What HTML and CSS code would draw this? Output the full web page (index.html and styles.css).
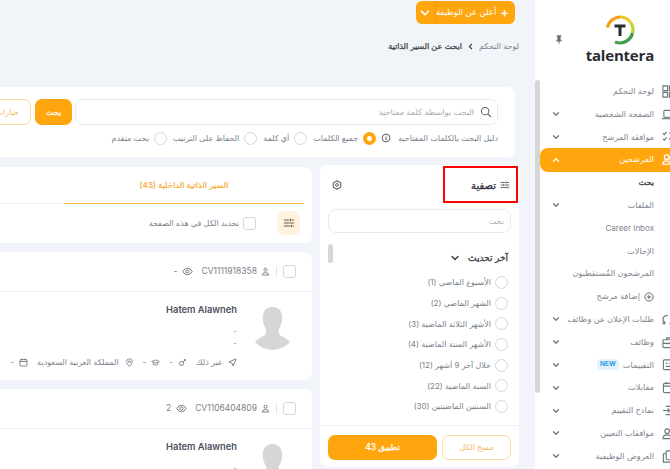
FILE: index.html
```html
<!DOCTYPE html>
<html lang="ar" dir="rtl">
<head>
  <meta charset="UTF-8">
  <title>talentera</title>
  <link rel="stylesheet" href="styles.css">
</head>
<body>
  <svg class="sprite" aria-hidden="true">
    <symbol id="i-chev" viewBox="0 0 12 12"><path d="M3 4.500 6 7.500 9 4.500" fill="none" stroke="currentColor" stroke-width="1.500" stroke-linecap="round" stroke-linejoin="round"/></symbol>
    <symbol id="i-sliders" viewBox="0 0 14 14"><path d="M1 3.500h6.500M10 3.500h3M1 7h2.500M6 7h7M1 10.500h7.500M11 10.500h2M8.750 2v3M4.750 5.500v3M9.750 9v3" fill="none" stroke="currentColor" stroke-width="1.200"/></symbol>
    <symbol id="i-user" viewBox="0 0 14 14"><circle cx="7" cy="4.200" r="2.400" fill="none" stroke="currentColor" stroke-width="1.200"/><path d="M2 12.500c0-2.500 2-3.700 5-3.700s5 1.200 5 3.700z" fill="none" stroke="currentColor" stroke-width="1.200"/></symbol>
    <symbol id="i-eye" viewBox="0 0 14 14"><path d="M1 7c2-3 4-4 6-4s4 1 6 4c-2 3-4 4-6 4s-4-1-6-4z" fill="none" stroke="currentColor" stroke-width="1.100"/><circle cx="7" cy="7" r="2" fill="none" stroke="currentColor" stroke-width="1.100"/></symbol>
    <symbol id="i-send" viewBox="0 0 14 14"><path d="M12.500 1.500 1.500 6l4.500 1.800L8 12.500z" fill="none" stroke="currentColor" stroke-width="1.200" stroke-linejoin="round"/></symbol>
    <symbol id="i-gender" viewBox="0 0 14 14"><circle cx="5.500" cy="8.500" r="3.200" fill="none" stroke="currentColor" stroke-width="1.200"/><path d="M8 6l3-3M9 2.500h2.500V5" fill="none" stroke="currentColor" stroke-width="1.200"/></symbol>
    <symbol id="i-grad" viewBox="0 0 14 14"><path d="M1 5.500 7 3l6 2.500L7 8z" fill="none" stroke="currentColor" stroke-width="1.100" stroke-linejoin="round"/><path d="M3.500 7v3c1 1.300 6 1.300 7 0V7" fill="none" stroke="currentColor" stroke-width="1.100"/></symbol>
    <symbol id="i-pin" viewBox="0 0 14 14"><path d="M7 13C4 10 2.500 8 2.500 5.800a4.500 4.500 0 0 1 9 0C11.500 8 10 10 7 13z" fill="none" stroke="currentColor" stroke-width="1.100"/><circle cx="7" cy="5.800" r="1.500" fill="none" stroke="currentColor" stroke-width="1.100"/></symbol>
    <symbol id="i-cal" viewBox="0 0 14 14"><rect x="1.500" y="2.500" width="11" height="10" rx="1.500" fill="none" stroke="currentColor" stroke-width="1.200"/><path d="M1.500 5.500h11M4.500 1v2.500M9.500 1v2.500" fill="none" stroke="currentColor" stroke-width="1.200"/></symbol>
    <symbol id="i-gear" viewBox="0 0 14 14"><path d="M7 1l5.200 3v6L7 13l-5.200-3V4z" fill="none" stroke="currentColor" stroke-width="1.500" stroke-linejoin="round"/><circle cx="7" cy="7" r="2" fill="none" stroke="currentColor" stroke-width="1.300"/></symbol>
    <symbol id="i-search" viewBox="0 0 14 14"><circle cx="6" cy="6" r="4.300" fill="none" stroke="currentColor" stroke-width="1.200"/><path d="M9.200 9.200 12.500 12.500" fill="none" stroke="currentColor" stroke-width="1.200" stroke-linecap="round"/></symbol>
    <symbol id="i-info" viewBox="0 0 14 14"><circle cx="7" cy="7" r="5.500" fill="none" stroke="currentColor" stroke-width="1.200"/><path d="M7 6.200v4M7 3.800v1.200" fill="none" stroke="currentColor" stroke-width="1.400"/></symbol>
    <symbol id="i-plus" viewBox="0 0 14 14"><circle cx="7" cy="7" r="5.800" fill="none" stroke="currentColor" stroke-width="1.200"/><path d="M7 4v6M4 7h6" fill="none" stroke="currentColor" stroke-width="1.200"/></symbol>
    <symbol id="i-grid" viewBox="0 0 14 14"><path d="M1 1h5v5H1zM8 1h5v5H8zM1 8h5v5H1zM8 8h5v5H8z" fill="none" stroke="currentColor" stroke-width="1.200"/></symbol>
    <symbol id="i-laptop" viewBox="0 0 14 14"><rect x="2" y="2.500" width="10" height="7.500" rx="1" fill="none" stroke="currentColor" stroke-width="1.200"/><path d="M0 11.500h14" stroke="currentColor" stroke-width="1.200"/></symbol>
    <symbol id="i-check" viewBox="0 0 14 14"><path d="M1 3.500 2.500 5 5 2M1 9.500 2.500 11 5 8M7.500 3.500H14M7.500 9.500H14" fill="none" stroke="currentColor" stroke-width="1.200"/></symbol>
    <symbol id="i-users" viewBox="0 0 14 14"><circle cx="5" cy="4.500" r="2.500" fill="none" stroke="currentColor" stroke-width="1.500"/><circle cx="10.500" cy="5.500" r="2" fill="none" stroke="currentColor" stroke-width="1.500"/><path d="M1 12c0-2.500 2-3.500 4-3.500s4 1 4 3.500zM9 8.500c2.500-.5 4.500.8 4.500 3.500H10" fill="none" stroke="currentColor" stroke-width="1.500"/></symbol>
    <symbol id="i-swap" viewBox="0 0 14 14"><path d="M6 2.500C3 2.500 1 4.500 1 7s1 3.500 2 4M8 11.500c3 0 5-2 5-4.500s-1-3.500-2-4M3 9v2.500H.5M11 5V2.500h2.500" fill="none" stroke="currentColor" stroke-width="1.300"/></symbol>
    <symbol id="i-case" viewBox="0 0 14 14"><rect x="1" y="4" width="12" height="8.500" rx="1" fill="none" stroke="currentColor" stroke-width="1.200"/><path d="M5 4V2h4v2M1 8h12M7 7v2" fill="none" stroke="currentColor" stroke-width="1.200"/></symbol>
    <symbol id="i-task" viewBox="0 0 14 14"><rect x="1.500" y="2" width="11" height="10.500" rx="1" fill="none" stroke="currentColor" stroke-width="1.200"/><path d="M4 5.500h2M8 5.500h2.500M4 9h6.500" fill="none" stroke="currentColor" stroke-width="1.200"/></symbol>
    <symbol id="i-login" viewBox="0 0 14 14"><path d="M4 2.500h8.500v9H4M1 7h7M6 4.800 8.200 7 6 9.200" fill="none" stroke="currentColor" stroke-width="1.200"/></symbol>
    <symbol id="i-person" viewBox="0 0 14 14"><circle cx="5.500" cy="4.500" r="2.500" fill="none" stroke="currentColor" stroke-width="1.200"/><path d="M1 12.500c0-3 2-4 4.500-4s4.500 1 4.500 4zM11 5l1.500 1.500L14 4" fill="none" stroke="currentColor" stroke-width="1.200"/></symbol>
    <symbol id="i-copy" viewBox="0 0 14 14"><rect x="4.500" y="1" width="8.500" height="9.500" rx="1" fill="none" stroke="currentColor" stroke-width="1.200"/><path d="M4.500 4H1.500v9h8v-2.500" fill="none" stroke="currentColor" stroke-width="1.200"/></symbol>
  </svg>

  <div class="app">
    <aside class="sidebar">
      <header class="brand">
        <div class="logo">
          <svg class="logo-mark" viewBox="0 0 32 32" width="32" height="32">
            <path d="M3.500 13.500A13 13 0 0 1 16 3" fill="none" stroke="#f6a01c" stroke-width="3.200"/>
            <path d="M16 3A13 13 0 0 1 27 9" fill="none" stroke="#ecc71f" stroke-width="3.200"/>
            <path d="M27 9A13 13 0 0 1 28.500 19" fill="none" stroke="#b9d433" stroke-width="3.200"/>
            <path d="M28.500 19A13 13 0 0 1 11 28" fill="none" stroke="#3f9f4a" stroke-width="3.200"/>
            <path d="M10.500 10.500h11v3h-4v8.500h-3v-8.500h-4z" fill="#2b2b30"/>
          </svg>
          <span class="logo-text">talentera</span>
        </div>
        <svg class="pin" viewBox="0 0 10 12" width="8" height="10"><path d="M2 0h6v1L7 2v3.500L9 7.500H6L5 12 4 7.500H1L3 5.500V2L2 1z" fill="#6a6f78"/></svg>
      </header>

      <nav class="menu">
        <a class="side-row"><svg class="side-icon"><use href="#i-grid"/></svg><span>لوحة التحكم</span></a>
        <a class="side-row"><svg class="side-icon"><use href="#i-laptop"/></svg><span>الصفحة الشخصية</span><svg class="side-chev"><use href="#i-chev"/></svg></a>
        <a class="side-row"><svg class="side-icon"><use href="#i-check"/></svg><span>موافقة المرشح</span><svg class="side-chev"><use href="#i-chev"/></svg></a>
        <a class="side-row is-active"><svg class="side-icon"><use href="#i-users"/></svg><span>المرشحين</span><svg class="side-chev is-open"><use href="#i-chev"/></svg></a>
        <a class="side-row is-sub is-current"><span>بحث</span></a>
        <a class="side-row is-sub"><span>الملفات</span><svg class="side-chev"><use href="#i-chev"/></svg></a>
        <a class="side-row is-sub is-latin"><span>Career Inbox</span></a>
        <a class="side-row is-sub"><span>الإحالات</span></a>
        <a class="side-row is-sub"><span>المرشحون المُستقطبون</span></a>
        <a class="side-row is-sub"><svg class="add-icon"><use href="#i-plus"/></svg><span>إضافة مرشح</span></a>
        <a class="side-row"><svg class="side-icon"><use href="#i-swap"/></svg><span>طلبات الإعلان عن وظائف</span><svg class="side-chev"><use href="#i-chev"/></svg></a>
        <a class="side-row"><svg class="side-icon"><use href="#i-case"/></svg><span>وظائف</span><svg class="side-chev"><use href="#i-chev"/></svg></a>
        <a class="side-row"><svg class="side-icon"><use href="#i-task"/></svg><span>التقييمات</span><b class="badge">NEW</b><svg class="side-chev"><use href="#i-chev"/></svg></a>
        <a class="side-row"><svg class="side-icon"><use href="#i-cal"/></svg><span>مقابلات</span><svg class="side-chev"><use href="#i-chev"/></svg></a>
        <a class="side-row"><svg class="side-icon"><use href="#i-login"/></svg><span>نماذج التقييم</span><svg class="side-chev"><use href="#i-chev"/></svg></a>
        <a class="side-row"><svg class="side-icon"><use href="#i-person"/></svg><span>موافقات التعيين</span><svg class="side-chev"><use href="#i-chev"/></svg></a>
        <a class="side-row"><svg class="side-icon"><use href="#i-copy"/></svg><span>العروض الوظيفية</span><svg class="side-chev"><use href="#i-chev"/></svg></a>
      </nav>
      <div class="side-thumb"></div>
    </aside>

    <main class="main">
      <div class="post-btn">
        <span class="post-label"><b>+</b> أعلن عن الوظيفة</span>
        <span class="post-drop"><svg><use href="#i-chev"/></svg></span>
      </div>

      <div class="crumbs">
        <span>لوحة التحكم</span>
        <svg><use href="#i-chev"/></svg>
        <strong>ابحث عن السير الذاتية</strong>
      </div>

      <section class="search-card">
        <div class="search-row">
          <div class="search-input">
            <svg><use href="#i-search"/></svg>
            <span>البحث بواسطة كلمة مفتاحية</span>
          </div>
          <div class="btn btn-main search-go">بحث</div>
          <div class="btn btn-ghost search-opts">خيارات</div>
        </div>
        <div class="search-modes">
          <span class="modes-label">دليل البحث بالكلمات المفتاحية</span>
          <svg class="modes-info"><use href="#i-info"/></svg>
          <label class="mode"><i class="radio is-on"></i>جميع الكلمات</label>
          <label class="mode"><i class="radio"></i>أي كلمة</label>
          <label class="mode"><i class="radio"></i>الحفاظ على الترتيب</label>
          <label class="mode"><i class="radio"></i>بحث متقدم</label>
        </div>
      </section>

      <div class="content">
        <aside class="filter">
          <header class="filter-head">
            <svg class="filter-icon"><use href="#i-sliders"/></svg>
            <h2>تصفية</h2>
            <svg class="filter-gear"><use href="#i-gear"/></svg>
          </header>
          <div class="filter-search">بحث</div>
          <div class="filter-body">
            <div class="filter-title">آخر تحديث <svg><use href="#i-chev"/></svg></div>
            <label class="filter-opt"><i class="radio"></i>الأسبوع الماضي (1)</label>
            <label class="filter-opt"><i class="radio"></i>الشهر الماضي (2)</label>
            <label class="filter-opt"><i class="radio"></i>الأشهر الثلاثة الماضية (3)</label>
            <label class="filter-opt"><i class="radio"></i>الأشهر الستة الماضية (4)</label>
            <label class="filter-opt"><i class="radio"></i>خلال آخر 9 أشهر (12)</label>
            <label class="filter-opt"><i class="radio"></i>السنة الماضية (22)</label>
            <label class="filter-opt"><i class="radio"></i>السنتين الماضيتين (30)</label>
            <div class="filter-thumb"></div>
          </div>
          <footer class="filter-foot">
            <div class="btn btn-ghost foot-clear">مسح الكل</div>
            <div class="btn btn-main foot-apply">تطبيق 43</div>
          </footer>
        </aside>

        <div class="results">
          <section class="tab-card">
            <div class="tabs"><div class="tab">السير الذاتية الداخلية (43)</div></div>
            <div class="tab-tools">
              <span class="tool-btn"><svg><use href="#i-sliders"/></svg></span>
              <i class="check"></i>
              <span class="tool-text">تحديد الكل في هذه الصفحة</span>
            </div>
          </section>

          <article class="cv-card">
            <header class="cv-head">
              <i class="check"></i>
              <span class="cv-sep"></span>
              <svg class="ico"><use href="#i-user"/></svg>
              <span class="cv-id">CV1111918358</span>
              <svg class="ico cv-eye"><use href="#i-eye"/></svg>
              <span>-</span>
            </header>
            <div class="cv-body">
              <svg class="avatar" viewBox="0 0 36 44"><path d="M18 0c6 0 10 4 10 11 0 4-1 8-3 11-1 2-1 5 1 7 3 2 8 4 10 7-4 5-11 8-18 8S4 41 0 36c2-3 7-5 10-7 2-2 2-5 1-7-2-3-3-7-3-11C8 4 12 0 18 0z" fill="#d6d6d6"/></svg>
              <div class="cv-info">
                <div class="cv-name">Hatem Alawneh</div>
                <div class="cv-dash">-</div>
                <div class="cv-dash">-</div>
                <div class="cv-meta">
                  <span class="meta-item is-wide"><svg class="ico"><use href="#i-send"/></svg><span>غير ذلك</span></span>
                  <span class="meta-item"><svg class="ico"><use href="#i-gender"/></svg><span>-</span></span>
                  <span class="meta-item"><svg class="ico"><use href="#i-grad"/></svg><span>-</span></span>
                  <span class="meta-item is-wide"><svg class="ico"><use href="#i-pin"/></svg><span>المملكة العربية السعودية</span></span>
                  <span class="meta-item"><svg class="ico"><use href="#i-cal"/></svg><span>-</span></span>
                </div>
              </div>
            </div>
          </article>

          <article class="cv-card">
            <header class="cv-head">
              <i class="check"></i>
              <span class="cv-sep"></span>
              <svg class="ico"><use href="#i-user"/></svg>
              <span class="cv-id">CV1106404809</span>
              <svg class="ico cv-eye"><use href="#i-eye"/></svg>
              <span>2</span>
            </header>
            <div class="cv-body">
              <svg class="avatar" viewBox="0 0 36 44"><path d="M18 0c6 0 10 4 10 11 0 4-1 8-3 11-1 2-1 5 1 7 3 2 8 4 10 7-4 5-11 8-18 8S4 41 0 36c2-3 7-5 10-7 2-2 2-5 1-7-2-3-3-7-3-11C8 4 12 0 18 0z" fill="#d6d6d6"/></svg>
              <div class="cv-info">
                <div class="cv-name">Hatem Alawneh</div>
                <div class="cv-dash">-</div>
              </div>
            </div>
          </article>
        </div>
      </div>

      <div class="marker"></div>
    </main>
  </div>
</body>
</html>
```

FILE: styles.css
```css
* {
  box-sizing: border-box;
}

html, body {
  height: 469px;
  margin: 0;
  overflow: hidden;
}

body {
  font: 8px/1.3 Inter, "DejaVu Sans", sans-serif;
  color: #7a7f8a;
  background: #f1f4f9;
}

.sprite {
  display: none;
}

.app {
  display: flex;
  height: 469px;
}

svg {
  display: block;
  flex: none;
}

/* sidebar */
.sidebar {
  position: relative;
  flex: none;
  width: 135px;
  height: 469px;
  padding-left: 5px;
  overflow: hidden;
  background: #fff;
}

.brand {
  display: flex;
  align-items: center;
  justify-content: space-between;
  height: 80px;
  padding: 0 16px 4px 15px;
}

.logo {
  display: flex;
  flex-direction: column;
  align-items: center;
  padding-top: 2px;
}

.logo-mark {
  width: 32px;
  height: 32px;
}

.logo-text {
  font: 700 15px/19px "Open Sans", sans-serif;
  letter-spacing: -0.2px;
  color: #2b2b30;
}

.pin {
  margin-bottom: -3px;
}

.menu {
  display: flex;
  flex-direction: column;
  margin-right: -5px;
}

.side-row {
  display: flex;
  flex: none;
  align-items: center;
  height: 22.800px;
  padding-left: 11px;
  font-size: 8.200px;
  white-space: nowrap;
  color: #80848d;
}

.side-row.is-sub {
  padding-right: 21px;
}

.side-row.is-latin {
  font-size: 8px;
}

.side-icon {
  width: 13px;
  height: 13px;
  margin-left: 8px;
  color: #6e737d;
}

.side-chev {
  width: 10px;
  height: 10px;
  margin-right: auto;
  color: #777;
}

.side-chev.is-open {
  transform: rotate(180deg);
}

.side-row.is-active {
  height: 24px;
  margin: -0.6px 0;
  border-top-left-radius: 8px;
  border-bottom-left-radius: 8px;
  color: #fff;
  background: #ffa50d;
}

.side-row.is-active .side-icon,
.side-row.is-active .side-chev {
  color: #fff;
}

.side-row.is-current {
  color: #33363d;
  -webkit-text-stroke: 0.25px #33363d;
}

.add-icon {
  width: 10px;
  height: 10px;
  margin-left: 4px;
  color: #555;
}

.badge {
  margin-right: 4px;
  padding: 1px 3px;
  border-radius: 4px;
  font-size: 6.500px;
  line-height: 9px;
  color: #2f9be8;
  background: #e3f3fd;
}

.side-thumb {
  position: absolute;
  top: 80px;
  left: 0;
  width: 5px;
  height: 313px;
  border-radius: 3px;
  background: #d6d6d6;
}

/* main column */
.main {
  position: relative;
  flex: 1;
  min-width: 0;
  height: 469px;
  padding: 1px 16px 0 0;
}

.post-btn {
  display: flex;
  width: 99px;
  height: 23px;
  margin-right: 4px;
  border-radius: 6px;
  color: #fff;
  background: #ffa50d;
}

.post-label {
  display: flex;
  flex: 1;
  align-items: center;
  gap: 4px;
  padding-right: 6px;
  font-size: 8.500px;
  white-space: nowrap;
}

.post-label b {
  font-size: 13px;
  font-weight: 600;
}

.post-drop {
  display: flex;
  align-items: center;
  justify-content: center;
  width: 23px;
  border-right: 1px solid #f59c05;
}

.post-drop svg {
  width: 14px;
  height: 14px;
}

.crumbs {
  display: flex;
  align-items: center;
  gap: 4px;
  height: 16px;
  margin-top: 14px;
  font-size: 8px;
}

.crumbs svg {
  width: 9px;
  height: 9px;
  color: #444;
  transform: rotate(90deg);
}

.crumbs strong {
  font-weight: 400;
  color: #3d4048;
  -webkit-text-stroke: 0.25px #3d4048;
}

.search-card {
  height: 70px;
  margin: 33px 4px 0 -50px;
  padding: 12px 17px 0;
  border-radius: 0 8px 8px 0;
  background: #fff;
}

.search-row {
  display: flex;
  gap: 3px;
  height: 26px;
}

.search-input {
  display: flex;
  flex: 1;
  align-items: center;
  gap: 6px;
  padding: 0 5px;
  border: 1px solid #e8eaee;
  border-radius: 8px;
  font-size: 8.200px;
  color: #a8acb4;
}

.search-input svg {
  width: 12px;
  height: 12px;
  color: #555b66;
}

.btn {
  display: flex;
  align-items: center;
  justify-content: center;
  border-radius: 7px;
  font-size: 8px;
  white-space: nowrap;
}

.btn-main {
  color: #fff;
  background: #ffa50d;
  -webkit-text-stroke: 0.25px #fff;
}

.btn-ghost {
  border: 1px solid #fbdca6;
  color: #f0b95b;
  background: #fff;
}

.search-go {
  width: 37px;
}

.search-opts {
  justify-content: flex-start;
  width: 64px;
  margin-right: 1px;
  padding-right: 11px;
}

.search-modes {
  display: flex;
  align-items: center;
  height: 14px;
  margin-top: 6px;
  white-space: nowrap;
}

.modes-info {
  width: 10px;
  height: 10px;
  margin: 0 7px 0 5px;
  color: #444;
}

.mode {
  display: flex;
  align-items: center;
  gap: 5px;
  margin-left: 6px;
}

.radio {
  display: block;
  flex: none;
  width: 13px;
  height: 13px;
  border: 1px solid #d5d7db;
  border-radius: 50%;
  background: #fff;
}

.radio.is-on {
  border: 4px solid #ffa50d;
}

.content {
  display: flex;
  gap: 8px;
  align-items: flex-start;
  margin: 8px 0 0 -100px;
}

/* filter panel */
.filter {
  display: flex;
  flex: none;
  flex-direction: column;
  width: 199px;
  height: 302px;
  border-radius: 8px;
  background: #fff;
}

.filter-head {
  display: flex;
  align-items: center;
  gap: 4px;
  height: 38px;
  padding: 2px 9px 0 10px;
}

.filter-icon {
  width: 10px;
  height: 10px;
  color: #4a4f59;
}

.filter-head h2 {
  margin: 0;
  font-size: 10px;
  font-weight: 400;
  color: #33363d;
  -webkit-text-stroke: 0.35px #33363d;
}

.filter-gear {
  width: 10px;
  height: 10px;
  margin-right: auto;
  margin-left: 2px;
  color: #555b66;
}

.filter-search {
  display: flex;
  align-items: center;
  height: 24px;
  margin: 6px 8px 0;
  padding: 0 6px;
  border: 1px solid #e8eaee;
  border-radius: 8px;
  color: #a8acb4;
}

.filter-body {
  position: relative;
  flex: 1;
  padding: 17px 11px 0 8px;
}

.filter-title {
  display: flex;
  align-items: center;
  gap: 7px;
  height: 16px;
  font-size: 9px;
  color: #3d4048;
  -webkit-text-stroke: 0.3px #3d4048;
}

.filter-title svg {
  width: 12px;
  height: 12px;
  color: #444;
}

.filter-opt {
  display: flex;
  align-items: center;
  gap: 4px;
  height: 20.700px;
  white-space: nowrap;
}

.filter-opt:first-of-type {
  margin-top: 6px;
}

.filter-thumb {
  position: absolute;
  top: 11px;
  left: 8px;
  width: 5px;
  height: 19px;
  border-radius: 3px;
  background: #d6d6d6;
}

.filter-foot {
  display: flex;
  gap: 5px;
  height: 42px;
  padding: 9px 8px 7px;
  border-top: 1px solid #eef0f4;
}

.foot-clear {
  width: 69px;
}

.foot-apply {
  flex: 1;
  font-size: 8.500px;
}

/* results column */
.results {
  flex: 1;
  display: flex;
  flex-direction: column;
  gap: 9px;
  margin-top: 2px;
}

.tab-card {
  height: 76px;
  padding: 0 8px;
  border-radius: 8px;
  background: #fff;
}

.tabs {
  height: 37px;
  border-bottom: 1px solid #ebedf0;
}

.tab {
  display: flex;
  align-items: center;
  justify-content: center;
  width: 240px;
  height: 37px;
  border-bottom: 1px solid #fbb23c;
  font-size: 8.200px;
  color: #f8ac35;
  -webkit-text-stroke: 0.2px #f8ac35;
}

.tab-tools {
  display: flex;
  align-items: center;
  gap: 4px;
  height: 38px;
  padding: 0 4px;
}

.tool-btn {
  display: flex;
  align-items: center;
  justify-content: center;
  width: 23px;
  height: 24px;
  margin-left: 17px;
  border-radius: 6px;
  color: #6b5f4a;
  background: #fff3df;
}

.tool-btn svg {
  width: 12px;
  height: 12px;
}

.check {
  display: block;
  flex: none;
  width: 13px;
  height: 13px;
  border: 1px solid #d5d7db;
  border-radius: 3px;
  background: #fff;
}

.cv-card {
  height: 128px;
  border-radius: 8px;
  background: #fff;
}

.cv-head {
  display: flex;
  align-items: center;
  height: 40px;
  padding-right: 16px;
  border-bottom: 1px solid #f0f1f4;
  font-size: 8.500px;
}

.cv-sep {
  width: 1px;
  height: 11px;
  margin: 0 6px;
  background: #e3e5e9;
}

.ico {
  width: 9px;
  height: 9px;
  color: #5d626d;
}

.cv-id {
  margin: 0 4px;
}

.cv-eye {
  width: 11px;
  height: 11px;
  margin: 0 4px 0 5px;
}

.cv-body {
  display: flex;
  padding: 14px 22px 0 0;
}

.avatar {
  width: 35px;
  height: 43px;
  margin: 1px 0 0 18px;
}

.cv-info {
  flex: 1;
  min-width: 0;
}

.cv-name {
  height: 14px;
  margin-top: -2px;
  font-size: 9.300px;
  font-weight: 600;
  color: #4a4f5c;
}

.cv-dash {
  height: 12px;
  line-height: 12px;
  color: #9a9ea6;
}

.cv-name + .cv-dash {
  margin-top: 7px;
}

.cv-meta {
  display: flex;
  align-items: center;
  gap: 9px;
  margin-top: 8px;
  white-space: nowrap;
}

.meta-item {
  display: flex;
  align-items: center;
  gap: 5px;
}

.meta-item.is-wide {
  gap: 6px;
}

/* annotation box drawn over the shot */
.marker {
  position: absolute;
  top: 166px;
  right: 17px;
  width: 75px;
  height: 37px;
  border: 2px solid #f00;
}
```
